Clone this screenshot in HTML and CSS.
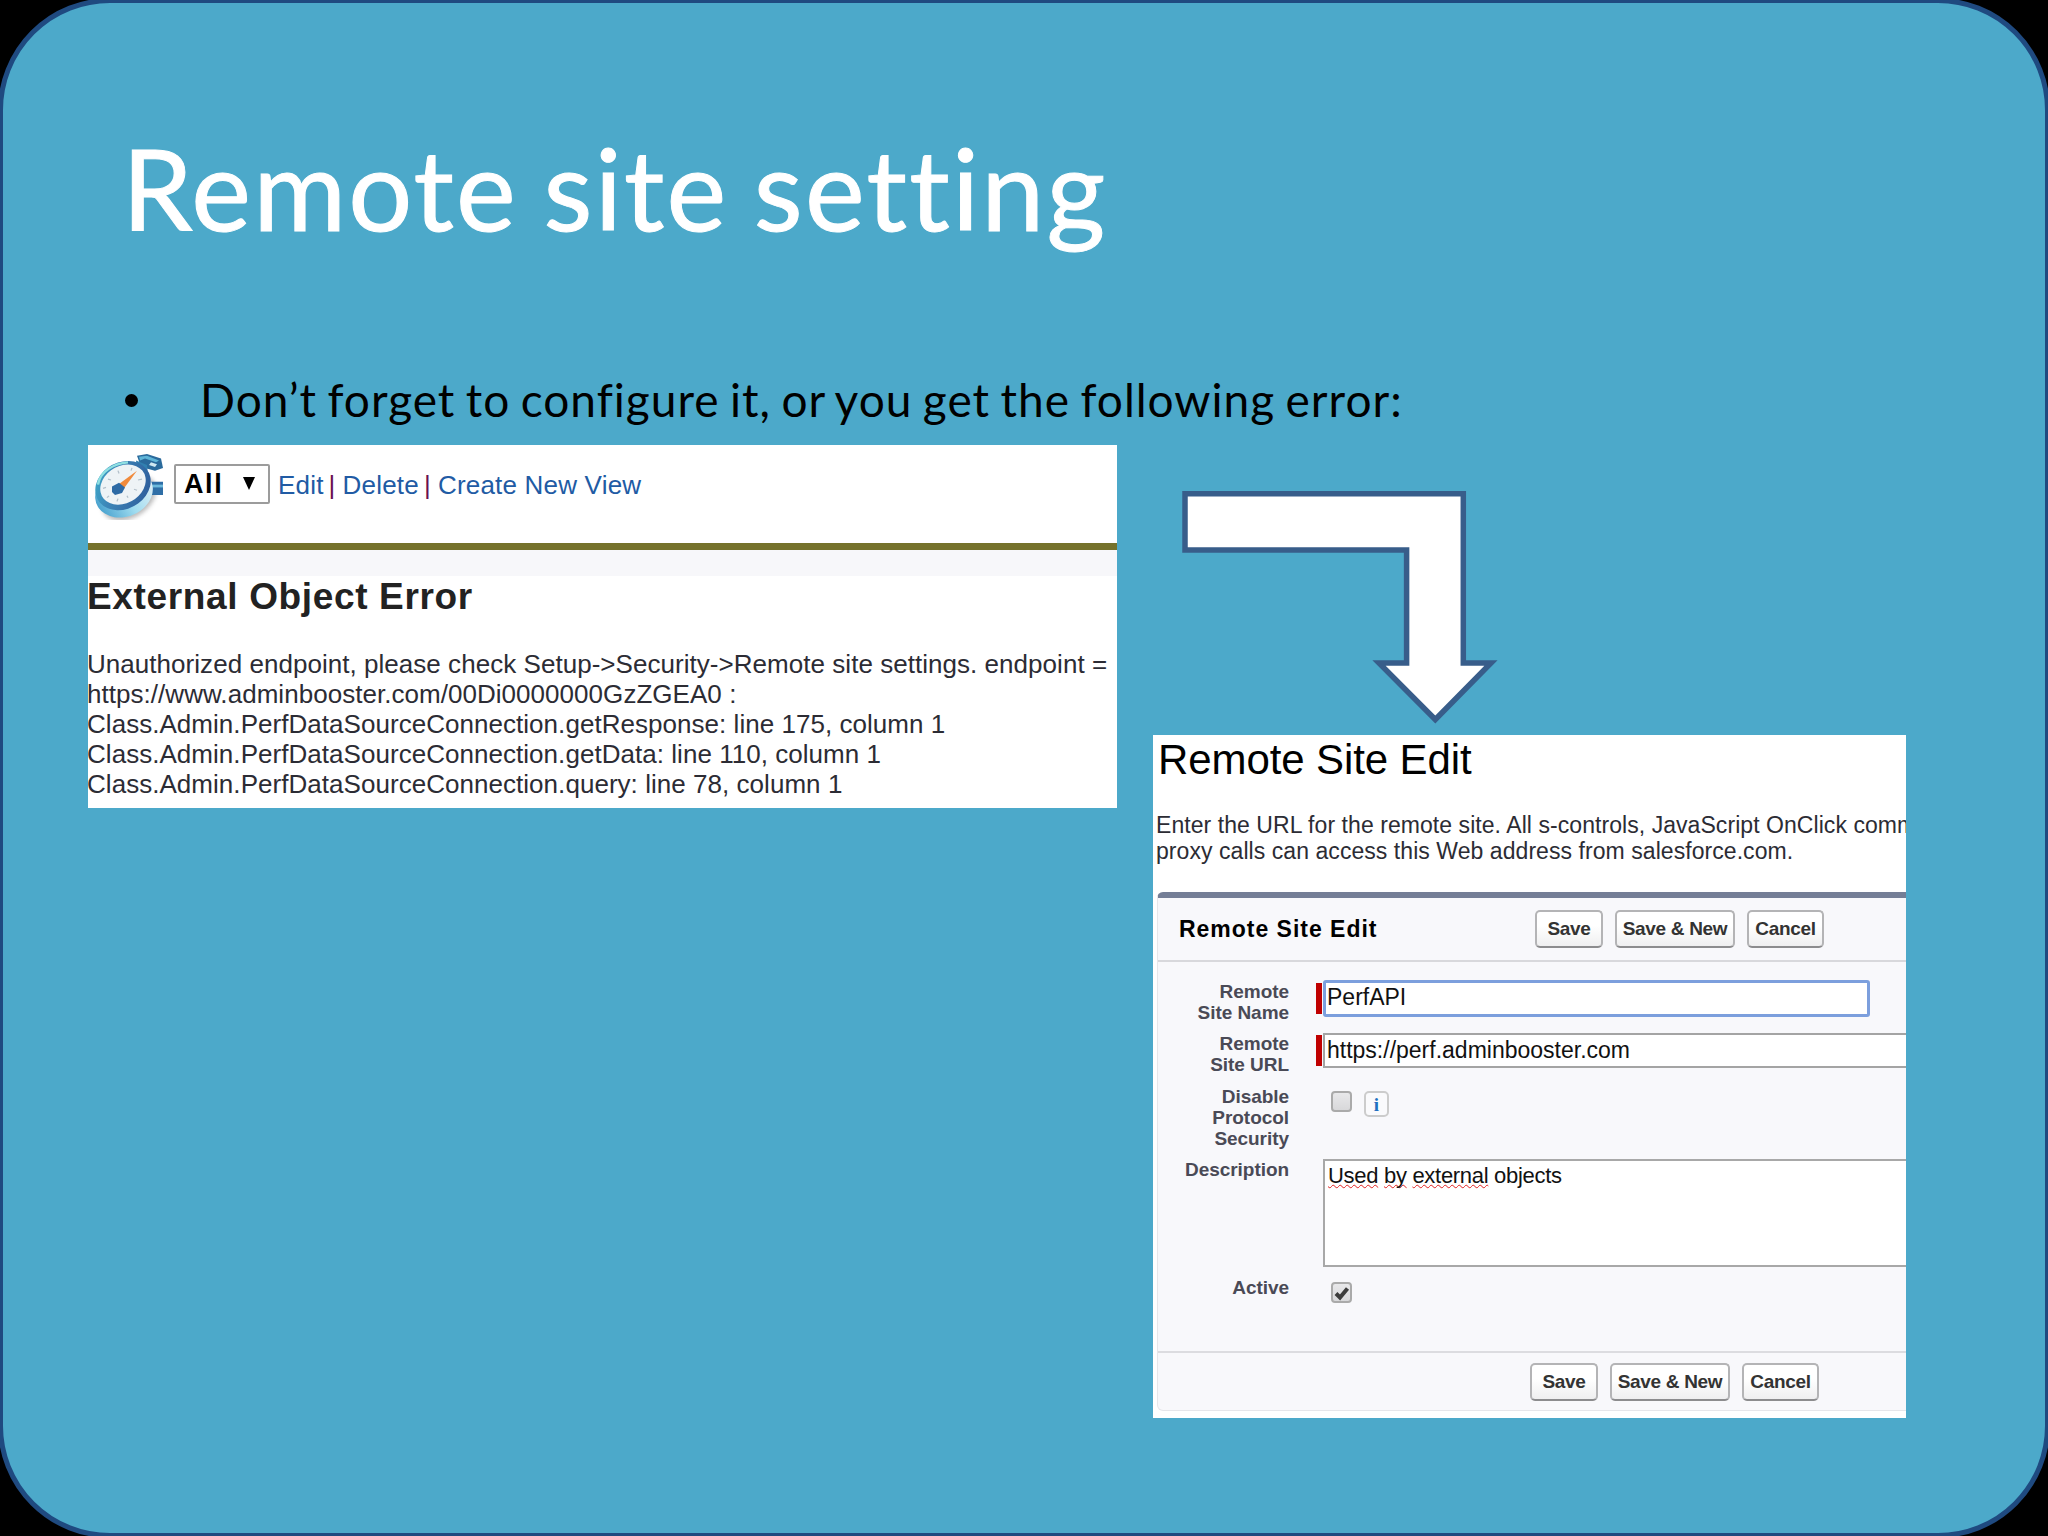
FILE: index.html
```
<!DOCTYPE html>
<html lang="en">

<head>
    <meta charset="UTF-8">
    <meta name="viewport" content="width=device-width, initial-scale=1.0">
    <title>Remote site setting</title>
    <link rel="stylesheet" href="styles.css">
</head>

<body>

    <div class="slide">
        <h1 class="slide-title">Remote site setting</h1>

        <ul class="bullets">
            <li>Don’t forget to configure it, or you get the following error:</li>
        </ul>

        <div class="columns">

            <div class="error-panel">
                <div class="view-bar">
                    <svg class="stopwatch" viewBox="0 0 70 72" width="70" height="67" preserveAspectRatio="none">
                        <defs>
                            <linearGradient id="rim" x1="0" y1="0" x2="1" y2="1">
                                <stop offset="0" stop-color="#3fb4cf"/>
                                <stop offset="0.35" stop-color="#3c86b8"/>
                                <stop offset="1" stop-color="#2c5596"/>
                            </linearGradient>
                            <linearGradient id="side" x1="0" y1="0" x2="1" y2="0">
                                <stop offset="0" stop-color="#4aa3cf"/>
                                <stop offset="0.5" stop-color="#9fdcf0"/>
                                <stop offset="1" stop-color="#dfeff6"/>
                            </linearGradient>
                            <filter id="soft"><feGaussianBlur stdDeviation="2.2"/></filter>
                        </defs>
                        <ellipse class="watch-shadow" cx="35" cy="48" rx="30" ry="21" transform="rotate(-38 35 48)"/>
                        <path fill="#2f6ea6" d="M54 31h15v14H56z"/>
                        <path fill="#6db9dc" d="M56 34h13v3H56z"/>
                        <path fill="#2a6a9c" d="M43 3L53 1l14 5 2 10-8 3-14-4z"/>
                        <path fill="#5fb5d8" d="M45 4l8-1 12 5-3 2-11-4-5 2z"/>
                        <path fill="#cfe8f2" d="M57 10l6 2-2 3-6-2z"/>
                        <path fill="#3180b0" d="M42 8l11 5 1 10-11-7z"/>
                        <ellipse cx="30" cy="43" rx="30" ry="25" fill="url(#side)" transform="rotate(-30 30 43)"/>
                        <ellipse cx="29" cy="35" rx="29.500" ry="24.500" fill="url(#rim)" transform="rotate(-38 29 35)"/>
                        <path fill="none" stroke="#8fe0e2" stroke-width="2.500" d="M4 34C6 20 20 11 34 10"/>
                        <ellipse cx="29" cy="34" rx="24.500" ry="19.500" fill="#eef3f6" transform="rotate(-38 29 34)"/>
                        <g stroke="#b4c1cb" stroke-width="1.300">
                            <path d="M9 38l3-1M13 48l2-2M23 52l1-3M34 48l-1-2M43 40l-3-1M48 28l-4 1M38 16l-1 3M24 19l1 3M14 28l3 1"/>
                        </g>
                        <path fill="#f08a3c" d="M43 19L24 34l6 4z"/>
                        <path fill="#2d6aa5" d="M18 36l7-4 6 5-3 6-7 2-3-3z"/>
                    </svg>
                    <div class="view-select"><span>All</span><i class="caret"></i></div>
                    <div class="view-links">
                        <a>Edit</a><span>|</span><a>Delete</a><span>|</span><a>Create New View</a>
                    </div>
                </div>
                <div class="band"></div>
                <h2>External Object Error</h2>
                <p>
                    Unauthorized endpoint, please check Setup-&gt;Security-&gt;Remote site settings. endpoint =<br>
                    https://www.adminbooster.com/00Di0000000GzZGEA0 :<br>
                    Class.Admin.PerfDataSourceConnection.getResponse: line 175, column 1<br>
                    Class.Admin.PerfDataSourceConnection.getData: line 110, column 1<br>
                    Class.Admin.PerfDataSourceConnection.query: line 78, column 1
                </p>
            </div>

            <div class="right-column">
                <svg class="arrow" viewBox="1181 489 320 236" width="320" height="236">
                    <path d="M1185 493.700H1463.300V663H1491L1435.300 719.500L1379 663H1406.600V550H1185Z"/>
                </svg>

                <div class="edit-panel">
                    <h2>Remote Site Edit</h2>
                    <p>
                        Enter the URL for the remote site. All s-controls, JavaScript OnClick comm<br>
                        proxy calls can access this Web address from salesforce.com.
                    </p>

                    <div class="section">
                        <div class="section-header">
                            <h3>Remote Site Edit</h3>
                            <div class="buttons">
                                <button class="save">Save</button>
                                <button class="save-new">Save &amp; New</button>
                                <button class="cancel">Cancel</button>
                            </div>
                        </div>

                        <div class="form">
                            <div class="row">
                                <label>Remote<br>Site Name</label>
                                <div class="field required">
                                    <input type="text" class="focused" value="PerfAPI">
                                </div>
                            </div>
                            <div class="row">
                                <label>Remote<br>Site URL</label>
                                <div class="field required">
                                    <input type="text" class="wide" value="https://perf.adminbooster.com">
                                </div>
                            </div>
                            <div class="row">
                                <label>Disable<br>Protocol<br>Security</label>
                                <div class="field checks">
                                    <span class="checkbox"></span>
                                    <span class="info">i</span>
                                </div>
                            </div>
                            <div class="row">
                                <label>Description</label>
                                <div class="field textarea"><u>Used</u> <u>by</u> <u>external</u> objects</div>
                            </div>
                            <div class="row">
                                <label>Active</label>
                                <div class="field checks">
                                    <span class="checkbox">
                                        <svg viewBox="0 0 16 16" width="16" height="16">
                                            <path d="M2 8.500L6 12.500L13.500 3.500"/>
                                        </svg>
                                    </span>
                                </div>
                            </div>
                        </div>

                        <div class="section-footer">
                            <div class="buttons">
                                <button class="save">Save</button>
                                <button class="save-new">Save &amp; New</button>
                                <button class="cancel">Cancel</button>
                            </div>
                        </div>
                    </div>
                </div>
            </div>

        </div>
    </div>

</body>

</html>
```
FILE: styles.css
```
* {
    box-sizing: border-box;
}

body {
    margin: 0;
    width: 2048px;
    height: 1536px;
    overflow: hidden;
    background-color: #000;
    font-family: "Liberation Sans", Arial, sans-serif;
}

h1, h2, h3, p, ul {
    margin: 0;
    padding: 0;
}

/* the outline runs slightly past the edge of the page */
.slide {
    width: 2052px;
    height: 1540px;
    margin: -2px;
    padding: 120px 0 0 85px;
    border: 5px solid #1f4a80;
    border-radius: 112px;
    background-color: #4ca9ca;
    overflow: hidden;
}

.slide-title {
    padding-left: 34px;
    font: 400 113px/129px Lato, Carlito, sans-serif;
    letter-spacing: 2.2px;
    word-spacing: -5.5px;
    font-variant-ligatures: none;
    color: white;
    -webkit-text-stroke: 1px white;
}

.bullets {
    margin-top: 121px;
    list-style: none;
}

.bullets li {
    display: flex;
    align-items: center;
    padding-left: 37px;
    font: 400 46px/54px Lato, Carlito, sans-serif;
    letter-spacing: 1px;
    word-spacing: -2.3px;
    font-variant-ligatures: none;
    color: black;
}

.bullets li::before {
    content: "";
    width: 13px;
    height: 13px;
    margin-right: 62px;
    border-radius: 50%;
    background-color: black;
}

.columns {
    display: flex;
    align-items: flex-start;
    gap: 36px;
    margin-top: 18px;
}

/* left: error message */

.error-panel {
    width: 1029px;
    height: 363px;
    background-color: white;
    overflow: hidden;
    white-space: nowrap;
}

.view-bar {
    display: flex;
    height: 105px;
    padding: 19px 0 0 6px;
    border-bottom: 7px solid #75722c;
}

.stopwatch {
    margin-top: -11px;
    flex: none;
}

.watch-shadow {
    fill: #777;
    opacity: 0.5;
    filter: url(#soft);
}

.view-select {
    display: flex;
    justify-content: space-between;
    align-items: center;
    width: 96px;
    height: 40px;
    margin-left: 10px;
    padding: 0 13px 0 8px;
    border: 2px solid #9c9c9c;
    border-radius: 2px;
    font-size: 27px;
    font-weight: bold;
    letter-spacing: 1.6px;
}

.caret {
    margin-bottom: 2px;
    border: 6.5px solid transparent;
    border-top: 13px solid black;
    border-bottom: none;
}

.view-links {
    display: flex;
    margin-left: 8px;
    font-size: 26px;
    line-height: 42px;
    letter-spacing: 0.2px;
}

.view-links a {
    color: #215ba4;
}

.view-links span {
    margin: 0 7px 0 5px;
    color: #6a1050;
}

.band {
    height: 26px;
    background-color: #f7f7fa;
}

.error-panel h2 {
    margin-left: -1px;
    font-size: 37px;
    line-height: 42px;
    letter-spacing: 0.65px;
    color: #222;
}

.error-panel p {
    margin: 31px 0 0 -1px;
    font-size: 26px;
    line-height: 30px;
    letter-spacing: 0.04px;
    color: #2c2c34;
}

/* right: arrow and form */

.right-column {
    width: 753px;
}

.arrow {
    display: block;
    margin: 44px 0 10px 28px;
    fill: white;
    stroke: #385d8a;
    stroke-width: 5.5;
}

.edit-panel {
    height: 683px;
    background-color: white;
    overflow: hidden;
    white-space: nowrap;
}

.edit-panel h2 {
    padding-left: 5px;
    font-size: 42px;
    font-weight: normal;
    line-height: 49px;
    letter-spacing: -0.1px;
}

.edit-panel p {
    margin: 28px 0 0 3px;
    font-size: 23px;
    line-height: 26px;
    letter-spacing: 0.06px;
    color: #2c2c34;
}

.section {
    width: 760px;
    height: 519px;
    margin: 28px 0 0 4px;
    border: 1px solid #e6e6ea;
    border-top: 6px solid #747e96;
    border-radius: 6px;
    background-color: #f8f8fb;
}

.section-header {
    display: flex;
    align-items: center;
    height: 64px;
    border-bottom: 2px solid #d8d8dc;
}

.section-header h3 {
    width: 377px;
    padding-left: 21px;
    font-size: 23px;
    letter-spacing: 0.98px;
}

.buttons {
    display: flex;
    gap: 12px;
}

button {
    height: 38px;
    padding: 0;
    border: 2px solid #b4b4b6;
    border-bottom-color: #8c8c8e;
    border-radius: 5px;
    background: linear-gradient(white 40%, #efeff0);
    font: bold 19px "Liberation Sans", Arial, sans-serif;
    letter-spacing: -0.3px;
    color: #333;
}

.save {
    width: 68px;
}

.save-new {
    width: 120px;
}

.cancel {
    width: 77px;
}

.form {
    display: flex;
    flex-direction: column;
    gap: 10.3px;
    height: 389px;
    padding: 19px 0 0 1px;
}

.row {
    display: flex;
    align-items: flex-start;
    gap: 27px;
}

.row label {
    flex: none;
    width: 130px;
    text-align: right;
    font-size: 19px;
    font-weight: bold;
    line-height: 21px;
    letter-spacing: -0.05px;
    color: #4a4a56;
}

.field {
    flex: none;
}

.required {
    display: flex;
    align-items: center;
    gap: 1px;
    height: 42px;
    margin-top: -4px;
}

.required::before {
    content: "";
    width: 6px;
    height: 31px;
    background-color: #c00000;
}

.field input {
    width: 547px;
    height: 37px;
    padding: 0 1px 2px;
    border: 3px solid #7c9fdd;
    border-radius: 3px;
    outline: none;
    background-color: white;
    font: 23px "Liberation Sans", Arial, sans-serif;
    color: #111;
}

.field .wide {
    width: 620px;
    height: 35px;
    padding: 0 2px;
    border: 2px solid #a4a4a4;
    border-radius: 0;
}

.checks {
    display: flex;
    gap: 12px;
    padding: 5px 0 0 15px;
}

.checkbox {
    display: flex;
    align-items: center;
    justify-content: center;
    width: 21px;
    height: 21px;
    border: 2px solid #aaa;
    border-radius: 4px;
    background: linear-gradient(#e8e8ea, #d8d8da);
}

.checkbox path {
    fill: none;
    stroke: #3c3c3c;
    stroke-width: 4;
}

.info {
    width: 25px;
    height: 26px;
    border: 2px solid #ccc;
    border-radius: 5px;
    background-color: #fafafc;
    text-align: center;
    font: bold 19px/23px "Liberation Serif", serif;
    color: #2070c0;
}

.textarea {
    width: 620px;
    height: 108px;
    margin-left: 7px;
    padding: 1px 3px;
    border: 2px solid #a8a8a8;
    background-color: white;
    font-size: 22px;
    line-height: 27px;
    letter-spacing: -0.3px;
    color: #111;
}

.textarea u {
    text-decoration: underline wavy #e02020 1px;
    text-underline-offset: 1px;
    text-decoration-skip-ink: none;
}

.section-footer {
    padding: 10px 0 0 372px;
    border-top: 2px solid #dcdce0;
}
```
